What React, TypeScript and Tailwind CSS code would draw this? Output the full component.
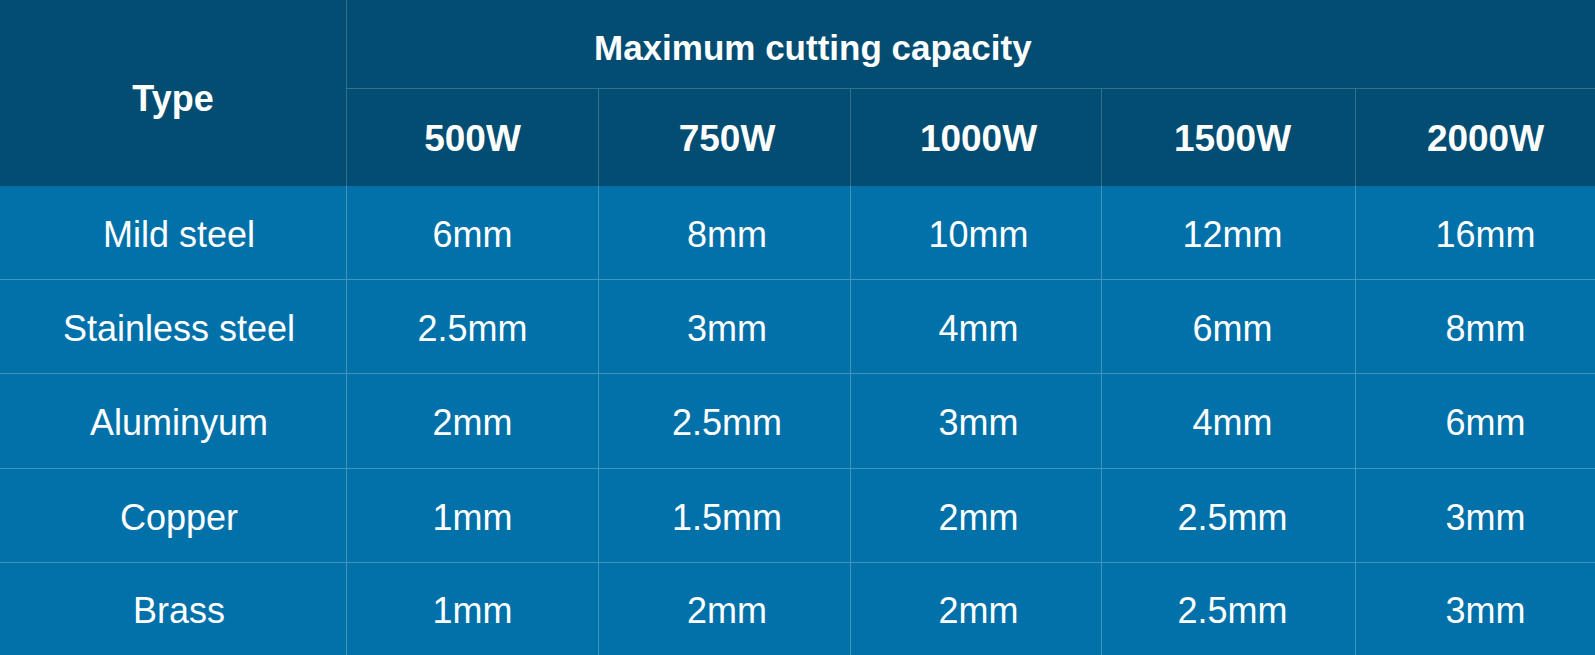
import React from "react";

const watts = ["500W", "750W", "1000W", "1500W", "2000W"];
const rows: [string, string[]][] = [
  ["Mild steel", ["6mm", "8mm", "10mm", "12mm", "16mm"]],
  ["Stainless steel", ["2.5mm", "3mm", "4mm", "6mm", "8mm"]],
  ["Aluminyum", ["2mm", "2.5mm", "3mm", "4mm", "6mm"]],
  ["Copper", ["1mm", "1.5mm", "2mm", "2.5mm", "3mm"]],
  ["Brass", ["1mm", "2mm", "2mm", "2.5mm", "3mm"]],
];

const shift = ["pl-0", "pl-[5px]", "pl-[5px]", "pl-[8px]", "pl-[2px]"];

export default function App() {
  return (
    <div className="w-[1595px] h-[655px] overflow-hidden bg-[#0271a9] font-[Liberation_Sans,Arial,sans-serif] text-white">
      <div className="grid w-[1613px] grid-cols-[346px_252px_252px_251px_254px_258px] grid-rows-[88px_98px_93px_94px_95px_94px_93px]">
        <div className="row-span-2 flex items-center justify-center bg-[#034d73] pt-[12px] text-[36px] font-bold">
          Type
        </div>
        <div className="col-span-5 flex items-center justify-start border-l border-white/20 bg-[#034d73] pl-[247px] pt-[8px] text-[35px] font-bold">
          Maximum cutting capacity
        </div>
        {watts.map((w, j) => (
          <div
            key={w}
            className={`flex items-center justify-center border-l border-t border-white/20 bg-[#034d73] pt-[2px] text-[37px] font-bold ${shift[j]}`}
          >
            {w}
          </div>
        ))}
        {rows.map(([name, vals], i) => (
          <React.Fragment key={name}>
            <div
              className={`flex items-center justify-center pl-[12px] pt-[4px] text-[36px] ${
                i > 0 ? "border-t border-white/25" : ""
              }`}
            >
              {name}
            </div>
            {vals.map((v, j) => (
              <div
                key={j}
                className={`flex items-center justify-center border-l border-white/25 pt-[4px] text-[36px] ${shift[j]} ${
                  i > 0 ? "border-t" : ""
                }`}
              >
                {v}
              </div>
            ))}
          </React.Fragment>
        ))}
      </div>
    </div>
  );
}
